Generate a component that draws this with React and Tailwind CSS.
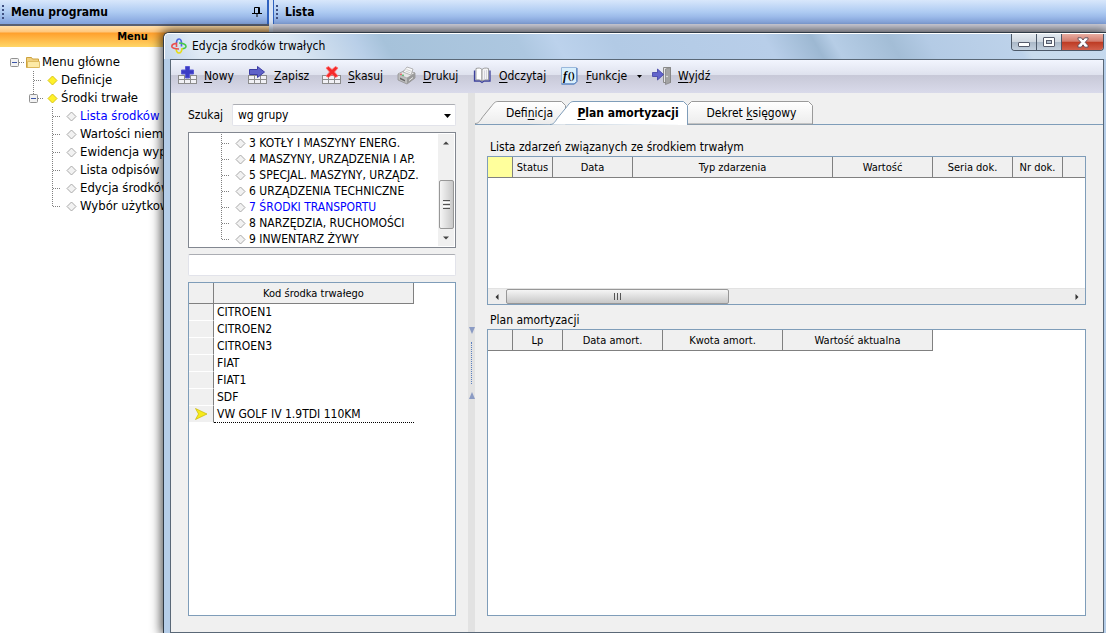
import React from "react";

const underline = (text, index = 0) => (
  <span>
    {text.slice(0, index)}
    <u className="underline-offset-2">{text[index]}</u>
    {text.slice(index + 1)}
  </span>
);

/* ---------- icons ---------- */

function GridBase() {
  return (
    <g fill="none" stroke="#8c8c8c" strokeWidth="1">
      <rect x="0.5" y="9.5" width="18" height="8" fill="#f1f1f5" />
      <path d="M0 13.5h19M6.5 9.5v8M12.5 9.5v8" />
    </g>
  );
}

function AddIcon() {
  return (
    <svg width="20" height="20" viewBox="0 0 20 20" aria-hidden="true">
      <GridBase />
      <path d="M7.500 0.500h4v3.500h4v4h-4v4h-4v-4h-4v-4h4z" fill="#3b3bc4" stroke="#5a5ad4" />
    </svg>
  );
}

function SaveIcon() {
  return (
    <svg width="20" height="20" viewBox="0 0 20 20" aria-hidden="true">
      <GridBase />
      <path d="M1.500 3.500h8v-3l7 5.500-7 5.500v-3h-8z" fill="#5f62c8" stroke="#3c3ca4" />
    </svg>
  );
}

function DeleteIcon() {
  return (
    <svg width="20" height="20" viewBox="0 0 20 20" aria-hidden="true">
      <GridBase />
      <path d="M4 2l2.500-1.500L10 3.500l3.500-3L16 2l-3.500 4L16 10l-2.500 1.500L10 8.500l-3.500 3L4 10l3.500-4z" fill="#f52a2a" stroke="#ff7070" strokeWidth=".8" />
    </svg>
  );
}

function PrintIcon() {
  return (
    <svg width="20" height="20" viewBox="0 0 20 20" aria-hidden="true">
      <path d="M1 8l8-4 9 3v5l-8 6-9-4z" fill="#bdbdbd" stroke="#888" strokeWidth=".7" />
      <path d="M1 8l9 4 8-5-9-3z" fill="#e6e6e6" stroke="#999" strokeWidth=".6" />
      <path d="M6 6l4-5 6 2-2 6z" fill="#fafafa" stroke="#999" strokeWidth=".7" />
      <path d="M8.500 5l5 2M9.500 3.500l5 1.800" stroke="#bbb" strokeWidth=".7" />
      <path d="M10 12v6l8-6V7z" fill="#9a9a9a" />
      <path d="M3 11.500l5 2.500v1.500l-5-2.200z" fill="#666" />
      <path d="M3 8.200h2" stroke="#e04040" />
      <path d="M12 14.500l4-3" stroke="#ededed" />
      <path d="M5 9.200h2" stroke="#35b050" />
    </svg>
  );
}

function BookIcon() {
  return (
    <svg width="20" height="20" viewBox="0 0 20 20" aria-hidden="true">
      <path d="M1.500 4.500v10.500h5.500l2 1.500 2-1.500h6V4.500" fill="#c9cdf0" stroke="#3d419c" strokeWidth="1.300" />
      <path d="M3 2.500c3-.8 4.500-.5 6 1v11.500c-1.500-1-3.500-1.500-6-1z" fill="#fff" stroke="#888" strokeWidth=".8" />
      <path d="M15.500 2.500c-3-.8-5-.5-6.500 1v11.500c1.500-1 4-1.500 6.500-1z" fill="#f4f4f6" stroke="#888" strokeWidth=".8" />
      <path d="M11.500 4.500v9M13.500 4v9" stroke="#d5d5dc" />
    </svg>
  );
}

function FunctionIcon() {
  return (
    <svg width="20" height="20" viewBox="0 0 20 20" aria-hidden="true">
      <path d="M1.500 1.500h15v14l-2.500 2.500h-12.500z" fill="#d9effc" stroke="#9ab8dc" />
      <path d="M17 2v13.500l-2.500 2.500h-13" fill="none" stroke="#3d6cb4" />
      <text x="3" y="13.500" fontSize="12" fontStyle="italic" fontWeight="700" fontFamily="Liberation Serif, serif">f</text>
      <text x="8" y="13" fontSize="10" fontWeight="700" fontFamily="Liberation Serif, serif">()</text>
    </svg>
  );
}

function ExitIcon() {
  return (
    <svg width="20" height="20" viewBox="0 0 20 20" aria-hidden="true">
      <path d="M11.500 1.500h7v15h-7z" fill="#e3e3e6" stroke="#8a8a8a" />
      <path d="M13.500 3l5-1.500v15l-5 2z" fill="#a3a3a3" stroke="#808080" strokeWidth=".7" />
      <circle cx="15" cy="10.500" r=".8" fill="#eee" />
      <path d="M0.500 6.500h5v-3.500l6 5.500-6 5.500v-3.500h-5z" fill="#6264cc" stroke="#3e3ea4" strokeWidth=".8" />
    </svg>
  );
}

function AppIcon() {
  return (
    <svg width="16" height="16" viewBox="0 0 16 16" fill="none" strokeWidth="1.600" aria-hidden="true">
      <path d="M5.500 5C5.500 2.500 6.500 1 8.300 1c2 0 2.400 3 2.200 7.500" stroke="#4a66e0" />
      <path d="M8 5c4 0 7 1.500 7 3.200 0 1.500-1.500 2.300-4 2.500" stroke="#45c84c" />
      <path d="M11 10c-.2 3.300-1.200 5-3 5s-2.800-2-2.900-5" stroke="#e6dc14" />
      <path d="M8 11C4 11 .8 10 .8 8.400S2.500 5.700 5.500 5.400V9" stroke="#ea5050" />
    </svg>
  );
}

function FolderIcon() {
  return (
    <svg width="14" height="13" viewBox="0 0 14 13" aria-hidden="true">
      <path d="M.5 11.500v-10h5l1 1.500h6v8.500z" fill="#f0d080" stroke="#cda23c" />
      <path d="M1.500 11.500V5.500h12v6z" fill="#fdeaa6" stroke="#d9b454" strokeWidth=".8" />
    </svg>
  );
}

function Diamond({ active }) {
  return (
    <svg width="11" height="11" viewBox="0 0 11 11" aria-hidden="true">
      <path
        d="M5.500 1L10 5.500 5.500 10 1 5.500z"
        fill={active ? "#fff12a" : "#f2f2f2"}
        stroke={active ? "#d8c414" : "#a9a9a9"}
      />
    </svg>
  );
}

function Arrow({ dir, className = "" }) {
  const paths = {
    up: "M1 5.500l3-3 3 3z",
    down: "M1 2.500h6l-3 3z",
    left: "M5.500 1v6l-3-3z",
    right: "M2.500 1v6l3-3z",
    tallUp: "M1 8l3-7 3 7z",
    tallDown: "M1 0h6l-3 7z",
  };
  return (
    <svg width="8" height="8" viewBox="0 0 8 8" className={className} fill="currentColor" aria-hidden="true">
      <path d={paths[dir]} />
    </svg>
  );
}

/* ---------- trees ---------- */

function Guide({ kind }) {
  const d = {
    branch: "M9.500 0V18M10 9.500H18",
    last: "M9.500 0V9M10 9.500H18",
    box: "M14 9.500H19",
    boxed: "M9.500 0V5M14 9.500H19",
    blank: "",
  }[kind];
  const hasBox = kind === "box" || kind === "boxed";
  return (
    <svg width="19" height="18" viewBox="0 0 19 18" className="shrink-0" aria-hidden="true">
      <path d={d} stroke="#808080" strokeDasharray="1 1" fill="none" />
      {hasBox && (
        <g>
          <rect x="5.500" y="5.500" width="8" height="8" rx="1" fill="#f2f2f2" stroke="#919191" />
          <path d="M7 9.500h5" stroke="#3c55a8" />
        </g>
      )}
    </svg>
  );
}

const menuItems = [
  { guides: ["box"], icon: "folder", label: "Menu główne" },
  { guides: ["blank", "branch"], icon: "active", label: "Definicje" },
  { guides: ["blank", "boxed"], icon: "active", label: "Środki trwałe" },
  { guides: ["blank", "blank", "branch"], label: "Lista środków", selected: true },
  { guides: ["blank", "blank", "branch"], label: "Wartości niematerialne" },
  { guides: ["blank", "blank", "branch"], label: "Ewidencja wyposażenia" },
  { guides: ["blank", "blank", "branch"], label: "Lista odpisów amortyzacji" },
  { guides: ["blank", "blank", "branch"], label: "Edycja środków" },
  { guides: ["blank", "blank", "last"], label: "Wybór użytkownika" },
];

const groups = [
  "3 KOTŁY I MASZYNY ENERG.",
  "4 MASZYNY, URZĄDZENIA I AP.",
  "5 SPECJAL. MASZYNY, URZĄDZ.",
  "6 URZĄDZENIA TECHNICZNE",
  "7 ŚRODKI TRANSPORTU",
  "8 NARZĘDZIA, RUCHOMOŚCI",
  "9 INWENTARZ ŻYWY",
];

function TreeRow({ guides, icon, label, selected, height }) {
  return (
    <li className={`flex items-center ${height}`}>
      {guides.map((kind, i) => (
        <Guide key={i} kind={kind} />
      ))}
      <button className={`flex items-center whitespace-nowrap ${selected ? "text-[#0000ff]" : "text-black"}`}>
        <span className="flex w-[18px] shrink-0 justify-center pt-px">
          {icon === "folder" ? <FolderIcon /> : <Diamond active={icon === "active"} />}
        </span>
        {label}
      </button>
    </li>
  );
}

/* ---------- grids ---------- */

function HeaderRow({ columns, marker }) {
  return (
    <thead>
      <tr className="h-[21px] text-[11px]">
        {columns.map((c, i) => (
          <th
            key={i}
            className={`overflow-hidden border-b border-[#808080] p-0 pt-px text-center font-normal whitespace-nowrap ${
              c.open ? "" : "border-r"
            } ${i === 0 && marker ? "bg-[#ffff9c]" : "bg-[#f0f0f0]"}`}
          >
            {c.label}
          </th>
        ))}
      </tr>
    </thead>
  );
}

const eventColumns = [
  { w: "w-[25px]" },
  { w: "w-[40px]", label: "Status" },
  { w: "w-[80px]", label: "Data" },
  { w: "w-[200px]", label: "Typ zdarzenia" },
  { w: "w-[100px]", label: "Wartość" },
  { w: "w-[80px]", label: "Seria dok." },
  { w: "w-[50px]", label: "Nr dok." },
  { w: "", open: true },
];

const planColumns = [
  { w: "w-[25px]" },
  { w: "w-[50px]", label: "Lp" },
  { w: "w-[100px]", label: "Data amort." },
  { w: "w-[120px]", label: "Kwota amort." },
  { w: "w-[150px]", label: "Wartość aktualna" },
];

const assetColumns = [{ w: "w-[25px]" }, { w: "w-[200px]", label: "Kod środka trwałego" }];

const assets = ["CITROEN1", "CITROEN2", "CITROEN3", "FIAT", "FIAT1", "SDF", "VW GOLF IV 1.9TDI 110KM"];

function Columns({ columns }) {
  return (
    <colgroup>
      {columns.map((c, i) => (
        <col key={i} className={c.w} />
      ))}
    </colgroup>
  );
}

/* ---------- toolbar and tabs ---------- */

const tools = [
  { icon: <AddIcon />, label: "Nowy", w: "w-[70px]" },
  { icon: <SaveIcon />, label: "Zapisz", w: "w-[74px]" },
  { icon: <DeleteIcon />, label: "Skasuj", w: "w-[75px]" },
  { icon: <PrintIcon />, label: "Drukuj", w: "w-[76px]" },
  { icon: <BookIcon />, label: "Odczytaj", w: "w-[87px]" },
  { icon: <FunctionIcon />, label: "Funkcje", w: "w-[92px]", menu: true },
  { icon: <ExitIcon />, label: "Wyjdź", w: "w-[70px]" },
];

function Toolbar() {
  return (
    <div
      role="toolbar"
      className="flex h-[33px] shrink-0 items-center bg-[linear-gradient(#f2f5fe_0%,#dfe2ee_44%,#c7c8d7_45%,#d9daea_100%)] pb-px pl-[7px]"
    >
      {tools.map((t) => (
        <button key={t.label} className={`flex shrink-0 items-center gap-1.5 whitespace-nowrap ${t.w}`}>
          {t.icon}
          {underline(t.label)}
          {t.menu && (
            <svg width="5" height="3" viewBox="0 0 5 3" className="ml-1" aria-hidden="true">
              <path d="M0 0h5L2.500 3z" />
            </svg>
          )}
        </button>
      ))}
    </div>
  );
}

function TabShape({ width, d, stroke, fill }) {
  return (
    <svg width={width} height="24" viewBox={`0 0 ${width} 24`} className="absolute inset-0" aria-hidden="true">
      <defs>
        <linearGradient id="tabFill" x1="0" y1="0" x2="0" y2="1">
          <stop offset="0" stopColor="#ffffff" />
          <stop offset="1" stopColor="#ececec" />
        </linearGradient>
      </defs>
      <path d={d} fill={fill} stroke={stroke} />
    </svg>
  );
}

function Tabs() {
  return (
    <div role="tablist" className="flex h-6 border-b border-[#7f9db9]">
      <button role="tab" aria-selected="false" className="relative h-6 w-[91px] pl-[18px]">
        <TabShape width={91} d="M0 22.500c4 0 5-3 8-7l9-11c3-4 4-4 7-4h62.500l4 4v19" stroke="#9a9a9a" fill="url(#tabFill)" />
        <span className="relative">{underline("Definicja", 4)}</span>
      </button>
      <button role="tab" aria-selected="true" className="relative -ml-4 h-6 w-[138px] pl-[18px] font-bold">
        <TabShape width={138} d="M0 23.500c4 0 5-3 8-7l9-11c3-4 4-5 7-5h109.500l4 4v19.500" stroke="#7f9db9" fill="#ffffff" />
        <span className="relative">{underline("Plan amortyzacji")}</span>
      </button>
      <button role="tab" aria-selected="false" className="relative h-6 w-[125px] pl-[2px]">
        <TabShape width={125} d="M-.5 4.500l4-4h117l4 4v18.500H-.5" stroke="#9a9a9a" fill="url(#tabFill)" />
        <span className="relative">{underline("Dekret księgowy", 7)}</span>
      </button>
    </div>
  );
}

/* ---------- window content ---------- */

function SearchPane() {
  return (
    <section className="flex w-[297px] shrink-0 flex-col pt-[11px] pr-[12px] pb-4 pl-[17px]">
      <div className="flex items-center justify-between">
        <label htmlFor="search-mode">Szukaj</label>
        <div className="relative w-[224px]">
          <select
            id="search-mode"
            className="block h-[22px] w-full appearance-none rounded-xs border border-[#e2e3ea] border-t-[#abadb3] bg-white px-[5px] outline-none"
          >
            <option>wg grupy</option>
          </select>
          <svg width="7" height="4" viewBox="0 0 7 4" className="pointer-events-none absolute top-[10px] right-[5px]" aria-hidden="true">
            <path d="M0 0h7L3.500 4z" />
          </svg>
        </div>
      </div>

      <div className="mt-[6px] flex h-[116px] shrink-0 border border-[#828790] bg-white">
        <ul className="min-w-0 flex-1 overflow-hidden pt-[2px] pl-[23px]">
          {groups.map((g, i) => (
            <TreeRow
              key={g}
              guides={[i === groups.length - 1 ? "last" : "branch"]}
              label={g}
              selected={i === 4}
              height="h-4"
            />
          ))}
        </ul>
        <div className="m-px flex w-[16px] flex-col items-center bg-[#f0f0f0] text-[#444]">
          <button aria-label="W górę" className="flex h-[17px] items-center"><Arrow dir="up" /></button>
          <div className="mt-[29px] flex h-[49px] w-[15px] flex-col items-center justify-center gap-px rounded-xs border border-[#979797] bg-gradient-to-r from-[#f5f5f5] to-[#c8c8c8]">
            <span className="h-px w-[7px] bg-[#555]" />
            <span className="h-px w-[7px] bg-white" />
            <span className="h-px w-[7px] bg-[#555]" />
            <span className="h-px w-[7px] bg-white" />
            <span className="h-px w-[7px] bg-[#555]" />
          </div>
          <button aria-label="W dół" className="flex h-[17px] items-center"><Arrow dir="down" /></button>
        </div>
      </div>

      <input
        aria-label="Szukany tekst"
        className="mt-[6px] h-[22px] w-full shrink-0 rounded-xs border border-[#e2e3ea] border-t-[#abadb3] bg-white px-1 outline-none"
      />

      <div className="mt-[6px] min-h-[160px] flex-1 border border-[#7f9db9] bg-white">
        <table className="w-[225px] table-fixed border-separate border-spacing-0">
          <Columns columns={assetColumns} />
          <HeaderRow columns={assetColumns} />
          <tbody>
            {assets.map((a, i) => {
              const current = i === assets.length - 1;
              return (
                <tr key={a} className="h-[17px]">
                  <td className="border-r border-b border-r-[#808080] border-b-white bg-[#f0f0f0] p-0">
                    {current && (
                      <svg width="14" height="12" viewBox="0 0 14 12" className="mx-auto block" aria-hidden="true">
                        <path d="M1.500 .5L13 6 1.500 11.500 4.500 6z" fill="#f7ea1c" stroke="#c8b800" strokeWidth=".7" />
                      </svg>
                    )}
                  </td>
                  <td
                    className={`p-0 pt-px pl-[3px] leading-[15px] whitespace-nowrap ${
                      current ? "border-b border-dotted border-black" : "border-b border-white"
                    }`}
                  >
                    {a}
                  </td>
                </tr>
              );
            })}
          </tbody>
        </table>
      </div>
    </section>
  );
}

function Splitter() {
  return (
    <div role="separator" className="flex w-[7px] shrink-0 flex-col items-center justify-center gap-[7px] overflow-hidden bg-[#e2e2e2] text-[#8b9bc4]">
      <Arrow dir="tallDown" className="shrink-0" />
      <div className="h-[42px] border-l border-dotted border-[#5b7fc0]" />
      <Arrow dir="tallUp" className="shrink-0" />
    </div>
  );
}

function PlanPane() {
  return (
    <section className="flex min-w-0 flex-1 flex-col pt-2">
      <Tabs />
      <div className="flex flex-1 flex-col pt-[14px] pr-[17px] pb-4 pl-[12px]">
        <h2 className="pl-[3px] leading-[17px]">Lista zdarzeń związanych ze środkiem trwałym</h2>
        <div className="flex h-[149px] shrink-0 flex-col justify-between border border-[#7f9db9] bg-white">
          <table className="w-full table-fixed border-separate border-spacing-0">
            <Columns columns={eventColumns} />
            <HeaderRow columns={eventColumns} marker />
          </table>
          <div className="flex h-4 items-center border-t border-[#e2e2e2] bg-[#ededed] text-[#333]">
            <button aria-label="W lewo" className="flex w-[18px] justify-center"><Arrow dir="left" /></button>
            <div className="flex h-[15px] w-[223px] items-center justify-center gap-[2px] rounded-xs border border-[#979797] bg-gradient-to-b from-[#f5f5f5] to-[#c8c8c8]">
              <span className="h-[7px] w-px bg-[#555]" />
              <span className="h-[7px] w-px bg-[#555]" />
              <span className="h-[7px] w-px bg-[#555]" />
            </div>
            <button aria-label="W prawo" className="ml-auto flex w-[17px] justify-center"><Arrow dir="right" /></button>
          </div>
        </div>

        <h2 className="mt-[7px] pl-[3px] leading-[17px]">Plan amortyzacji</h2>
        <div className="min-h-[160px] flex-1 border border-[#7f9db9] bg-white">
          <table className="w-[445px] table-fixed border-separate border-spacing-0">
            <Columns columns={planColumns} />
            <HeaderRow columns={planColumns} />
          </table>
        </div>
      </div>
    </section>
  );
}

function CaptionButtons() {
  const glass = "flex items-center justify-center bg-[linear-gradient(#e3e9f0_0%,#cfd7e0_48%,#a9b7c7_50%,#c3d0de_100%)]";
  return (
    <div className="mr-[2px] flex h-[17px] divide-x divide-[#4c5868] overflow-hidden rounded-b-[4px] border border-t-0 border-[#4c5868]">
      <button aria-label="Minimalizuj" className={`w-[25px] ${glass}`}>
        <svg width="12" height="5" viewBox="0 0 12 5" className="mt-1"><rect x=".5" y=".5" width="11" height="4" rx=".5" fill="#fff" stroke="#565b6b" /></svg>
      </button>
      <button aria-label="Maksymalizuj" className={`w-[25px] ${glass}`}>
        <svg width="12" height="10" viewBox="0 0 12 10">
          <rect x=".5" y=".5" width="11" height="9" rx=".5" fill="#fff" stroke="#565b6b" />
          <rect x="3.500" y="3.500" width="5" height="3" fill="#b4c0ce" stroke="#565b6b" />
        </svg>
      </button>
      <button aria-label="Zamknij" className="flex w-[41px] items-center justify-center bg-[linear-gradient(#e9ada2_0%,#d37b6c_46%,#bd3a22_50%,#d2604c_100%)]">
        <svg width="12" height="11" viewBox="0 0 12 11">
          <path d="M1 .8h3.300L6 3 7.700.8H11v1.400L8.200 5.300 11 8.500v1.700H7.700L6 7.800l-1.700 2.400H1V8.500l2.800-3.200L1 2.200z" fill="#fff" stroke="#5a4a58" strokeWidth=".9" />
        </svg>
      </button>
    </div>
  );
}

function EditWindow() {
  return (
    <div
      role="dialog"
      aria-label="Edycja środków trwałych"
      className="absolute top-8 right-0 bottom-0 left-[163px] flex flex-col rounded-tl-[6px] border-t border-l border-[#2f3a46] bg-[#b5cde8] shadow-[0_0_11px_2px_rgba(0,0,0,0.7)]"
    >
      <div className="flex h-[26px] shrink-0 items-start justify-between rounded-tl-[5px] border-t border-l border-white bg-[linear-gradient(60deg,#c3d6ea_0%,#dfeaf5_4%,#dbe7f3_14%,#c3d6ea_19%,#b9cfe8_21%,#a6c2da_24%,#adc7e0_38%,#bcd2ec_42%,#b2cae5_48%,#b8cee9_64%,#9db8d2_69%,#b6cde6_71%,#a3bdd6_77%,#b4cbe5_81%,#bdd2ea_90%,#c9dbec_91%,#c5d9ee_100%)]">
        <h1 className="flex h-[23px] items-center gap-[5px] pl-[6px]">
          <AppIcon />
          Edycja środków trwałych
        </h1>
        <CaptionButtons />
      </div>
      <div className="mr-[2px] ml-[6px] flex min-h-0 flex-1 flex-col border border-[#5a6877] bg-[#f0f0f0]">
        <Toolbar />
        <div className="flex min-h-0 flex-1">
          <SearchPane />
          <Splitter />
          <PlanPane />
        </div>
      </div>
    </div>
  );
}

function Grip() {
  return (
    <svg width="3" height="15" viewBox="0 0 3 15" aria-hidden="true">
      <path d="M1 0v15" stroke="#3f4f80" strokeWidth="2" strokeDasharray="2 2" />
    </svg>
  );
}

const panelHeader =
  "flex h-6 items-center gap-[6px] bg-gradient-to-b from-[#d8e7fb] via-[#aecbf2] to-[#82a2dc] pl-[2px] text-[12px] font-bold";

export default function App() {
  return (
    <div className="relative flex h-screen min-h-[600px] overflow-hidden bg-white font-['DejaVu_Sans_Condensed','Noto_Sans',sans-serif] text-[12px] leading-4 text-black">
      <aside className="w-[269px] shrink-0">
        <header className={`${panelHeader} border-r-2 border-[#2f62c0]`}>
          <Grip />
          <h2>Menu programu</h2>
          <button aria-label="Przypnij" className="mr-[5px] ml-auto">
            <svg width="10" height="10" viewBox="0 0 10 10" fill="none" stroke="#000">
              <path d="M2.500 6V.5h4V6M7.500 6V.5h-2M0 6.500h10M5 7v3" />
            </svg>
          </button>
        </header>
        <div className="flex h-[23px] items-center justify-center border-t-2 border-[#596072] bg-[linear-gradient(#ffe0ae_0%,#ffc578_30%,#ff9f2c_32%,#ffd667_100%)] pr-1 text-[11px] font-bold">
          Menu
        </div>
        <nav className="pt-[6px] pl-[5px] text-[13px]">
          <ul>
            {menuItems.map((item) => (
              <TreeRow key={item.label} {...item} height="h-[18px]" />
            ))}
          </ul>
        </nav>
      </aside>
      <main className="min-w-0 flex-1 border-l-4 border-[#d9e4f5] bg-[#d5d6e2]">
        <header className={`${panelHeader} border-l border-[#2f62c0]`}>
          <Grip />
          <h2>Lista</h2>
        </header>
      </main>
      <EditWindow />
    </div>
  );
}
